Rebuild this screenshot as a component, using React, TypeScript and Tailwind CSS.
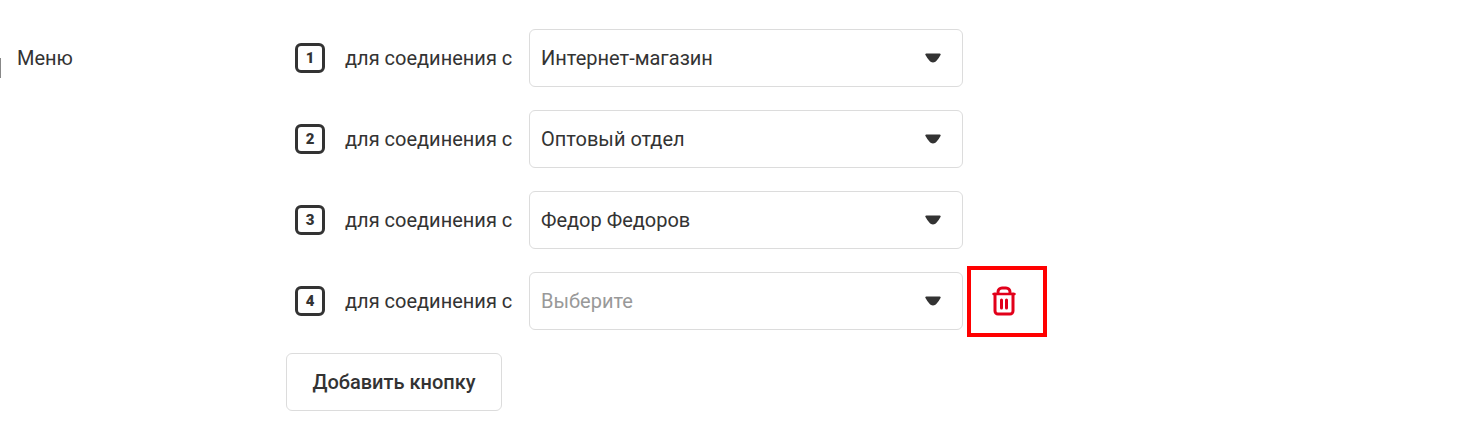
import { useState } from "react";

const OPTIONS = ["Интернет-магазин", "Оптовый отдел", "Федор Федоров"];

interface MenuRowProps {
  digit: number;
  value: string;
  onChange: (value: string) => void;
  onRemove?: () => void;
}

function TrashIcon() {
  return (
    <svg width="26" height="32" viewBox="0 0 26 32" fill="none" stroke="#e2001a" strokeWidth="3" strokeLinecap="round" strokeLinejoin="round" aria-hidden="true">
      <path d="M2.500 9h21" strokeWidth="2.500" />
      <path d="M4 9v17a3 3 0 0 0 3 3h12a3 3 0 0 0 3-3V9" />
      <path d="M7 8V7a4 4 0 0 1 4-4h4a4 4 0 0 1 4 4v1" />
      <path d="M10.500 15v8M15.500 15v8" />
    </svg>
  );
}

function MenuRow({ digit, value, onChange, onRemove }: MenuRowProps) {
  return (
    <div className="flex items-center">
      <span className="ml-[9px] flex size-[30px] shrink-0 items-center justify-center rounded-md border-3 border-[#333] text-[15px] leading-none font-black">
        {digit}
      </span>
      <label htmlFor={`menu-${digit}`} className="ml-5 w-[184px] shrink-0">
        для соединения с
      </label>
      <div className="relative min-w-0 max-w-[434px] flex-1">
        <select
          id={`menu-${digit}`}
          value={value}
          onChange={(e) => onChange(e.target.value)}
          className={`block h-[58px] w-full appearance-none rounded-md border border-[#dcdcdc] bg-white pr-12 pl-[11px] ${value ? "text-[#333]" : "text-[#999]"}`}
        >
          <option value="" disabled>Выберите</option>
          {OPTIONS.map((option) => (
            <option key={option} value={option}>{option}</option>
          ))}
        </select>
        <svg className="pointer-events-none absolute top-6 right-[22px]" width="16" height="10" viewBox="0 0 16 10" fill="#333" aria-hidden="true">
          <path d="M1.300 0.500h13.400c.9 0 1.300.9.800 1.600C14.500 4 13 6 11.500 7.800 10.500 9 9.500 9.500 8 9.500S5.500 9 4.500 7.800C3 6 1.500 4 .5 2.100 0 1.400.4.500 1.300.5z" />
        </svg>
      </div>
      {onRemove && (
        <button
          type="button"
          aria-label="Удалить"
          onClick={onRemove}
          className="-my-[7px] ml-1 flex h-[71px] w-20 shrink-0 items-center justify-center border-4 border-[#f00] pr-1.5"
        >
          <TrashIcon />
        </button>
      )}
    </div>
  );
}

export default function App() {
  const [rows, setRows] = useState([...OPTIONS, ""]);

  return (
    <div className="flex min-h-screen bg-white pt-[29px] font-['Roboto',sans-serif] text-[20px] leading-6 text-[#333]">
      <div className="flex h-[58px] w-[286px] shrink-0 items-center">
        <div className="mt-5 h-5 w-px bg-[#888]" />
        <h2 className="ml-4">Меню</h2>
      </div>
      <div className="flex min-w-0 flex-1 flex-col items-start gap-[23px]">
        {rows.map((value, i) => (
          <div key={i} className="w-full">
            <MenuRow
              digit={i + 1}
              value={value}
              onChange={(next) => setRows(rows.map((row, j) => (j === i ? next : row)))}
              onRemove={i > 0 && i === rows.length - 1 ? () => setRows(rows.slice(0, -1)) : undefined}
            />
          </div>
        ))}
        <button
          type="button"
          onClick={() => setRows([...rows, ""])}
          className="h-[58px] min-w-[216px] rounded-md border border-[#dcdcdc] px-6 font-medium"
        >
          Добавить кнопку
        </button>
      </div>
    </div>
  );
}
